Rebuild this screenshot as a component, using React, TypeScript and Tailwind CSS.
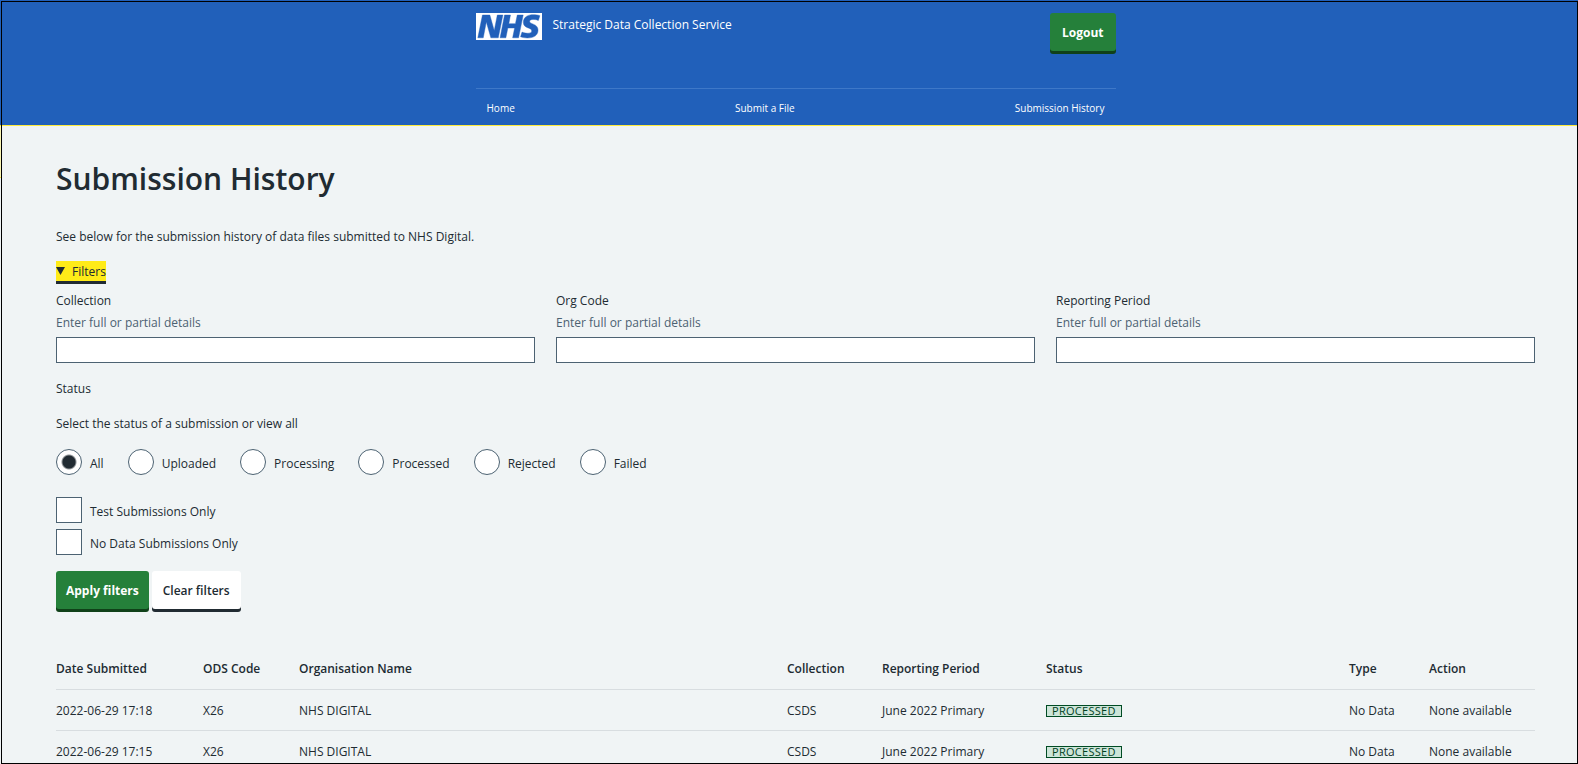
import { useState } from "react";

const columns = [
  { name: "Date Submitted", width: "w-[147px]" },
  { name: "ODS Code", width: "w-[96px]" },
  { name: "Organisation Name", width: "" },
  { name: "Collection", width: "w-[95px]" },
  { name: "Reporting Period", width: "w-[164px]" },
  { name: "Status", width: "w-[303px]" },
  { name: "Type", width: "w-[80px]" },
  { name: "Action", width: "w-[106px]" },
];

const submissions = ["2022-06-29 17:18", "2022-06-29 17:15"];
const statuses = ["All", "Uploaded", "Processing", "Processed", "Rejected", "Failed"];
const textFilters = ["Collection", "Org Code", "Reporting Period"];

function NhsLogo() {
  return (
    <svg role="img" aria-label="NHS" viewBox="0 0 40 16" className="h-[27px] w-[66px]" preserveAspectRatio="none">
      <path fill="#fff" d="M0 0h40v16H0z" />
      <path
        fill="#2160ba"
        stroke="#2160ba"
        strokeWidth="0.25"
        d="M3.9 1.2h4.500l2.600 9h.1l1.800-9h3.400l-2.800 13.500H9l-2.700-9.200h-.1l-1.800 9.200H1.100zM17.300 1.200h3.600l-1 5.100h4L25 1.200h3.600l-2.800 13.500h-3.600l1.200-5.800h-4.100l-1.200 5.800h-3.500zM37.800 4.400c-.7-.3-1.700-.6-2.900-.6-1.400 0-2.400.2-2.400 1.200 0 1.800 5.100 1.200 5.100 5.100 0 3.700-3.400 4.700-6.500 4.700-1.400 0-3-.3-4.100-.7l.9-2.800c.7.4 2.100.7 3.200.7 1 0 2.700-.2 2.700-1.400 0-2.100-5.100-1.300-5.100-5 0-3.500 3-4.600 5.900-4.600 1.600 0 3.200.2 4.100.6z"
      />
    </svg>
  );
}

function Header() {
  return (
    <header className="bg-[#2160ba] pl-3 text-white">
      <div className="mx-auto w-[640px] max-w-full">
        <div className="flex h-[87px] items-start justify-between border-b border-[#3e78c8] pt-[11px]">
          <a href="#home" className="flex items-center gap-[11px] leading-5">
            <NhsLogo />
            <span className="pb-1">Strategic Data Collection Service</span>
          </a>
          <button
            type="button"
            className="h-[38px] rounded-[3px] bg-[#25803a] px-3 pt-0.5 font-bold shadow-[0_3px_0_#104119]"
          >
            Logout
          </button>
        </div>
        <nav className="flex h-9 items-center justify-between px-[11px] pt-0.5 text-[10px]">
          <a href="#home">Home</a>
          <a href="#submit">Submit a File</a>
          <a href="#history">Submission History</a>
        </nav>
      </div>
    </header>
  );
}

function Filters() {
  const [status, setStatus] = useState("All");
  return (
    <details open className="mt-[14px]">
      <summary className="inline-flex h-[23px] cursor-pointer list-none items-center gap-[7px] border-b-[3px] border-[#212b32] bg-[#ffeb18]">
        <svg viewBox="0 0 9 8" className="h-2 w-[9px]" aria-hidden="true">
          <path d="M0 0h9L4.500 8z" fill="#212b32" />
        </svg>
        <span className="pt-0.5">Filters</span>
      </summary>
      <form onSubmit={(e) => e.preventDefault()}>
        <div className="mt-[6px] grid grid-cols-3 gap-[21px]">
          {textFilters.map((name) => (
            <div key={name}>
              <label htmlFor={name} className="block leading-[22px]">
                {name}
              </label>
              <span id={name + "-hint"} className="block leading-[22px] text-[#4c6272]">
                Enter full or partial details
              </span>
              <input
                id={name}
                type="text"
                aria-describedby={name + "-hint"}
                className="mt-[3px] block h-[26px] w-full border border-[#4c6272] bg-white px-1"
              />
            </div>
          ))}
        </div>
        <fieldset className="mt-4">
          <legend className="leading-5">Status</legend>
          <p className="mt-[15px] leading-5">Select the status of a submission or view all</p>
          <div className="mt-[15px] flex gap-6">
            {statuses.map((name) => (
              <label key={name} className="flex items-center gap-2">
                <input
                  type="radio"
                  name="status"
                  checked={status === name}
                  onChange={() => setStatus(name)}
                  className="size-[26px] appearance-none rounded-full border border-[#4c6272] bg-white checked:bg-[radial-gradient(circle,#212b32_0_6px,#fff_8px)]"
                />
                <span className="pt-[3px]">{name}</span>
              </label>
            ))}
          </div>
        </fieldset>
        <div className="mt-[22px] flex flex-col items-start gap-1.5">
          {["Test Submissions Only", "No Data Submissions Only"].map((name) => (
            <label key={name} className="flex items-center gap-2">
              <input
                type="checkbox"
                className="size-[26px] appearance-none border border-[#4c6272] bg-white checked:bg-[#4c6272]"
              />
              <span className="pt-[3px]">{name}</span>
            </label>
          ))}
        </div>
        <div className="mt-4 flex gap-[3px]">
          <button
            type="submit"
            className="h-[38px] rounded-[3px] bg-[#25803a] px-2.5 pt-0.5 font-bold text-white shadow-[0_3px_0_#104119]"
          >
            Apply filters
          </button>
          <button
            type="reset"
            onClick={() => setStatus("All")}
            className="h-[38px] rounded-[3px] bg-white px-[11px] pt-0.5 font-semibold shadow-[0_3px_0_#212b32]"
          >
            Clear filters
          </button>
        </div>
      </form>
    </details>
  );
}

function SubmissionsTable() {
  return (
    <table className="mt-[39px] w-full table-fixed text-left">
      <thead>
        <tr className="h-[41px] border-b border-[#d8dde0]">
          {columns.map((column) => (
            <th key={column.name} className={"pt-0.5 font-semibold " + column.width}>
              {column.name}
            </th>
          ))}
        </tr>
      </thead>
      <tbody>
        {submissions.map((date) => (
          <tr key={date} className="h-[41px] border-b border-[#d8dde0] *:pt-0.5">
            <td>{date}</td>
            <td>X26</td>
            <td>NHS DIGITAL</td>
            <td>CSDS</td>
            <td>June 2022 Primary</td>
            <td>
              <span className="inline-flex h-3 items-center border border-[#004b23] bg-[#cce5d8] px-[5px] text-[11px] tracking-wide text-[#00401e]">
                PROCESSED
              </span>
            </td>
            <td>No Data</td>
            <td>None available</td>
          </tr>
        ))}
      </tbody>
    </table>
  );
}

export default function App() {
  return (
    <div className="h-screen overflow-hidden bg-[linear-gradient(#2160ba_0_125px,#ffeb3b_125px_126px,#fbf6b4_126px_177px,#ffeb3b_177px_178px,#f0f4f5_178px)] pt-px pl-px font-['Open_Sans',sans-serif] text-[12px] text-[#212b32]">
      <div className="h-full overflow-hidden border border-black bg-[#f0f4f5]">
        <Header />
        <div className="border-t border-[#ffeb3b]" />
        <main className="pt-[31px] pr-[42px] pl-[54px]">
          <h1 className="text-[30px] leading-[44px] font-semibold">Submission History</h1>
          <p className="mt-[26px] leading-5">See below for the submission history of data files submitted to NHS Digital.</p>
          <Filters />
          <SubmissionsTable />
        </main>
      </div>
    </div>
  );
}
